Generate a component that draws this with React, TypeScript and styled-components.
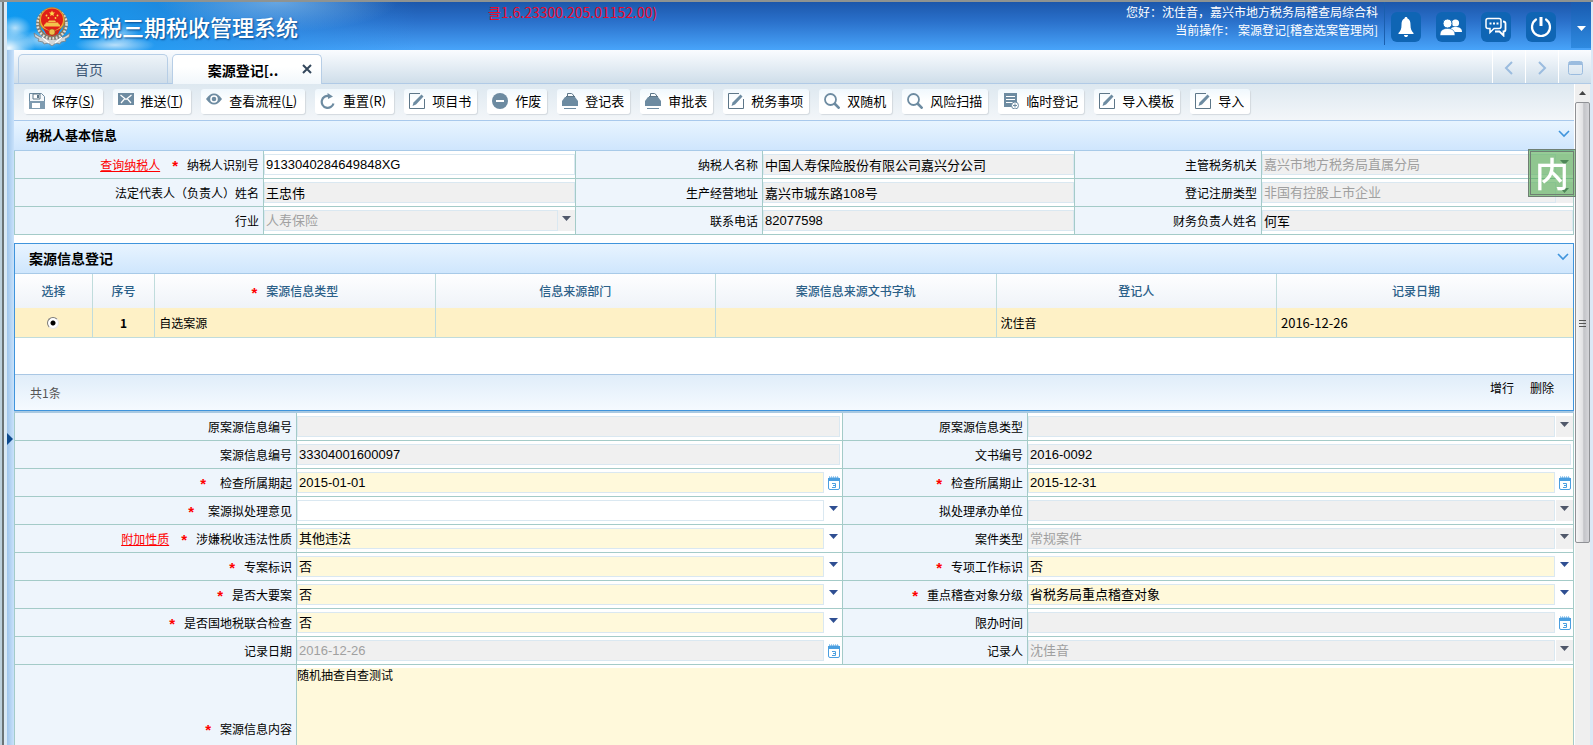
import React, { useId } from "react";
import styled, { createGlobalStyle, css } from "styled-components";

const uiFont = `"Noto Sans CJK SC", "Noto Sans", sans-serif`;
const valueFont = `"Liberation Sans", "Noto Sans CJK SC", sans-serif`;
const gridLine = "#a4cbc8";

const GlobalStyle = createGlobalStyle`
  *, *::before, *::after { box-sizing: border-box; }
  html, body { margin: 0; height: 100%; overflow: hidden; }
  body { font: 12px/18px ${uiFont}; color: #000; background: #fff; }
  button, input, select, textarea { font: inherit; color: inherit; margin: 0; border-radius: 0; }
  button { border: 0; background: none; padding: 0; cursor: pointer; }
`;

/* ---------- window frame ---------- */

const Window = styled.div`
  display: flex;
  height: 100vh;
  overflow: hidden;
  border-top: 2px solid #8f9391;
`;

const FrameEdge = styled.div`
  flex: none;
  width: 7px;
  background: linear-gradient(90deg, #bccfdb 0 2px, #6b7375 2px 4px, #d9e8f4 4px);
`;

const FrameRight = styled.div`
  flex: none;
  width: 2px;
  background: #dbe9f6;
`;

const Main = styled.div`
  flex: 1;
  min-width: 0;
  display: flex;
  flex-direction: column;
`;

const Body = styled.div`
  flex: 1;
  min-height: 0;
  display: flex;
`;

const Rail = styled.button`
  flex: none;
  width: 7px;
  display: flex;
  align-items: center;
  background: linear-gradient(90deg, #9fc4ea, #c9e2fb);
  padding-top: 83px;
`;

const Workspace = styled.div`
  flex: 1;
  min-width: 0;
  display: flex;
  flex-direction: column;
`;

/* ---------- header ---------- */

const Header = styled.header`
  flex: none;
  height: 48px;
  display: flex;
  align-items: flex-start;
  color: #fff;
  background:
    radial-gradient(ellipse 26px 18px at 2px 46px, #fffffff0, #ffffff00),
    radial-gradient(ellipse 16px 12px at 8px 26px, #ffffffb0, #ffffff00),
    radial-gradient(ellipse 26px 10px at 34px 38px, #ffffff90, #ffffff00),
    radial-gradient(ellipse 40px 9px at 108px 43px, #ffffffb0, #ffffff00),
    radial-gradient(ellipse 16px 11px at 116px 32px, #ffffff60, #ffffff00),
    radial-gradient(ellipse 120px 30px at 270px 0, #8fc4f0a0, #8fc4f000),
    linear-gradient(90deg, #0f9af0 0, #1a9bf0d0 120px, #2a92ea80 260px, #2a86e000 410px),
    linear-gradient(#1c57ab, #2a70ca 40%, #48a4fa);
`;

const Brand = styled.h1`
  display: flex;
  align-items: center;
  gap: 7px;
  margin: 0;
  padding-left: 26px;
  height: 48px;
  font-size: 22px;
  line-height: 32px;
  font-weight: 500;
  white-space: nowrap;
  text-shadow: 1px 1px 2px #0a4a8c;
`;

const Version = styled.div`
  flex: 1;
  padding-left: 190px;
  font-size: 14px;
  line-height: 20px;
  color: #ec0a2c;
  white-space: nowrap;
`;

const UserInfo = styled.div`
  padding: 1px 6px 0 0;
  height: 43px;
  text-align: right;
  white-space: nowrap;
  border-right: 1px solid #1a5fae;
`;

const HeaderTools = styled.div`
  display: flex;
  gap: 15px;
  padding: 10px 15px 0 6px;
`;

const HeaderButton = styled.button`
  width: 30px;
  height: 30px;
  border-radius: 6px;
  background: #0f65b4;
  display: grid;
  place-items: center;
`;

const HeaderMore = styled.button`
  width: 20px;
  height: 46px;
  background: linear-gradient(#195bb0, #2e8ae0);
  display: grid;
  place-items: center;
  padding-top: 6px;
`;

/* ---------- tabs ---------- */

const TabStrip = styled.nav`
  flex: none;
  height: 34px;
  display: flex;
  align-items: flex-end;
  gap: 4px;
  padding-left: 4px;
  border-bottom: 1px solid #b0cae6;
  background: linear-gradient(#fafcff, #cfdeea);
`;

const Tab = styled.div<{ $active?: boolean }>`
  display: flex;
  align-items: center;
  width: 150px;
  height: 29px;
  padding: 0 16px 0 8px;
  border: 1px solid #b7cee6;
  border-bottom: 0;
  border-radius: 5px 5px 0 0;
  background: linear-gradient(#eef4f9, #cfdde9);
  ${(p) => p.$active && css`
    height: 30px;
    padding: 0 9px 0 11px;
    margin-bottom: -1px;
    background: linear-gradient(#fff 40%, #f1f7fb);
  `}
`;

const TabLabel = styled.button<{ $active?: boolean }>`
  flex: 1;
  font-size: 14px;
  line-height: 20px;
  color: ${(p) => (p.$active ? "#000" : "#3d5775")};
  font-weight: ${(p) => (p.$active ? 700 : 400)};
`;

const TabClose = styled.button`
  width: 10px;
  height: 18px;
  padding-bottom: 2px;
  display: grid;
  place-items: center;
`;

const TabNav = styled.div`
  display: flex;
  align-self: stretch;
  margin-left: auto;
`;

const TabNavButton = styled.button`
  width: 33px;
  display: grid;
  place-items: center;
  border-left: 1px solid #fff;
  padding-top: 3px;
`;

/* ---------- toolbar ---------- */

const Pane = styled.div`
  flex: 1;
  min-height: 0;
  display: flex;
`;

const Content = styled.main`
  flex: 1;
  min-width: 0;
  overflow: hidden;
  background: #fff;
  padding-right: 1px;
`;

const Toolbar = styled.div`
  display: flex;
  gap: 10px;
  height: 37px;
  padding: 5px 10px;
  border-bottom: 1px solid #a9c9ec;
  background: linear-gradient(#dde8f0, #f3f6f9);
`;

const ToolButton = styled.button<{ $hotkey?: boolean }>`
  display: flex;
  align-items: center;
  gap: 7px;
  height: 25px;
  padding: 0 ${(p) => (p.$hotkey ? 8 : 6)}px 2px 5px;
  font-size: 13px;
  line-height: 20px;
  white-space: nowrap;
  border-radius: 3px;
  background: linear-gradient(#f0f8fd, #fff 50%);
  box-shadow: 1px 1px 1px #d3d9de;
`;

/* ---------- sections and forms ---------- */

const SectionHead = styled.div<{ $framed?: boolean }>`
  display: flex;
  align-items: flex-start;
  justify-content: space-between;
  height: 30px;
  padding: 4px 4px 0 12px;
  border-bottom: 1px solid #a8cae8;
  background: linear-gradient(#e8f4ff, #cfe6fd);
  ${(p) => p.$framed && css`padding-left: 14px;`}
`;

const SectionTitle = styled.h2<{ $large?: boolean }>`
  margin: 0;
  font-size: ${(p) => (p.$large ? 14 : 13)}px;
  line-height: 20px;
  font-weight: 700;
`;

const CollapseButton = styled.button`
  width: 12px;
  padding-top: 5px;
  line-height: 0;
`;

const FormGrid = styled.div<{ $columns: string }>`
  display: grid;
  grid-template-columns: ${(p) => p.$columns};
  border-left: 1px solid ${gridLine};
`;

const LabelCell = styled.div`
  display: flex;
  align-items: center;
  justify-content: flex-end;
  min-width: 0;
  padding-right: 4px;
  background: #eef5fc;
  border: solid ${gridLine};
  border-width: 0 1px 1px 0;
  white-space: nowrap;
`;

const LabelLink = styled.a`
  color: #f00;
  margin-right: 12px;
`;

const Star = styled.span<{ $wide?: boolean }>`
  padding-top: 2px;
  margin-right: ${(p) => (p.$wide ? 14 : 9)}px;
  font: 700 15px/15px "Liberation Sans", sans-serif;
  color: #f00;
`;

const ValueCell = styled.div<{ $inset?: boolean; $span?: boolean }>`
  display: flex;
  min-width: 0;
  height: 28px;
  padding: 3px ${(p) => (p.$inset ? 2 : 0)}px 3px 0;
  border: solid ${gridLine};
  border-width: 0 1px 1px 0;
  ${(p) => p.$span && css`grid-column: span 3; height: 128px;`}
`;

type Tone = "plain" | "locked" | "required";
const toneColor: Record<Tone, string> = { plain: "#fff", locked: "#f0f0f0", required: "#fff9db" };

const control = css<{ $tone: Tone; $muted?: boolean }>`
  flex: 1;
  min-width: 0;
  height: 21px;
  padding: 0 1px;
  border: 1px solid #dae8f1;
  outline: 0;
  background: ${(p) => toneColor[p.$tone]};
  font: 13px/19px ${valueFont};
  color: ${(p) => (p.$muted ? "#a0a0a0" : "#000")};
`;

const TextInput = styled.input`${control}`;

const SelectInput = styled.select`
  ${control}
  appearance: none;
  opacity: 1;
`;

const ArrowBox = styled.span<{ $locked?: boolean; $apart?: boolean }>`
  flex: none;
  width: 17px;
  height: 21px;
  margin-left: ${(p) => (p.$apart ? 1 : 0)}px;
  padding: 6px 0 0 4px;
  line-height: 0;
  background: ${(p) => (p.$locked ? "#f0f0f0" : "transparent")};
`;

const DateButton = styled.button`
  flex: none;
  width: 17px;
  height: 21px;
  margin-left: 1px;
  display: grid;
  place-items: center;
`;

const NoteArea = styled.textarea`
  flex: 1;
  min-width: 0;
  padding: 0;
  border: 0;
  outline: 0;
  resize: none;
  background: #fff9db;
  font: 12px/14px ${uiFont};
`;

/* ---------- case table ---------- */

const CasePanel = styled.section`
  margin-top: 8px;
  border: 1px solid #3f94dc;
`;

const CaseTable = styled.table`
  width: 100%;
  table-layout: fixed;
  border-collapse: separate;
  border-spacing: 0;
`;

const HeadCell = styled.th<{ $width: string }>`
  width: ${(p) => p.$width};
  height: 34px;
  padding: 0;
  font-weight: 500;
  color: #2b6088;
  background: linear-gradient(#fefeff, #eff3f8);
  border-right: 1px solid #c0dcdc;
  &:last-child { border-right: 0; padding-right: 18px; }
`;

const HeadContent = styled.span`
  display: flex;
  align-items: center;
  justify-content: center;
`;

const DataCell = styled.td<{ $center?: boolean; $date?: boolean }>`
  height: 30px;
  padding: 0 4px;
  text-align: ${(p) => (p.$center ? "center" : "left")};
  font-weight: ${(p) => (p.$center ? 700 : 400)};
  font-size: ${(p) => (p.$date ? 13 : 12)}px;
  line-height: 18px;
  background: #fef1c6;
  border: solid #c0dcdc;
  border-width: 0 1px 1px 0;
  &:last-child { border-right: 0; }
`;

const RowRadio = styled.input`
  appearance: none;
  display: block;
  width: 12px;
  height: 12px;
  margin: 0 auto;
  border: 1px solid;
  border-color: #7a7a7a #e8e8e8 #e8e8e8 #7a7a7a;
  border-radius: 50%;
  background: radial-gradient(circle, #000 0 2px, #fff 3px);
`;

const CaseFooter = styled.div`
  display: flex;
  justify-content: space-between;
  height: 36px;
  margin-top: 36px;
  padding: 4px 19px 0 15px;
  border-top: 1px solid #a9c7e4;
  background: linear-gradient(#e0edf9, #f5faff);
`;

const RowCount = styled.span`
  padding-top: 5px;
  color: #555;
`;

const FooterActions = styled.div`
  display: flex;
  align-items: flex-start;
  gap: 16px;
`;

const Divider = styled.div`
  height: 2px;
  background: #a9c9e2;
`;

/* ---------- scroll bar and floating badge ---------- */

const ScrollBar = styled.div`
  flex: none;
  width: 16px;
  display: flex;
  flex-direction: column;
  border-right: 1px solid #dbe9f6;
  background: #efefef;
`;

const ScrollUp = styled.button`
  height: 18px;
  display: grid;
  place-items: center;
`;

const ScrollThumb = styled.div`
  flex: 440;
  display: grid;
  place-items: center;
  border: 1px solid #8f9195;
  border-radius: 2px;
  background: linear-gradient(90deg, #f6f6f6, #e2e2e4 50%, #c3c4c8 60%, #d6d6da);
`;

const ScrollRest = styled.div`
  flex: 202;
`;

const ImeBadge = styled.div`
  position: fixed;
  top: 149px;
  right: 17px;
  width: 48px;
  height: 48px;
  display: grid;
  place-items: center;
  border: 3px double #6f7f73;
  background: #4ca84c96;
  color: #fff;
  font-size: 34px;
  font-weight: 500;
  line-height: 42px;
`;

/* ---------- drawings ---------- */

const Svg = ({ w = 16, h = w, box, children }: { w?: number; h?: number; box?: string; children: React.ReactNode }) => (
  <svg width={w} height={h} viewBox={box ?? `0 0 ${w} ${h}`} fill="none" aria-hidden="true">{children}</svg>
);

const Emblem = () => (
  <Svg w={38} h={40}>
    <path d="M1 27c5 4 10 6 18 6s13-2 18-6l-1 4-4 2 1 2-5 1-1 2-4-1-4 3-4-3-4 1-1-2-5-1 1-2-4-2z" fill="#d4d6d8" stroke="#777d82" strokeWidth=".8" />
    <path d="M9 31l7 6M29 31l-7 6" stroke="#fff" strokeWidth="1.300" />
    <circle cx="19" cy="18" r="14" stroke="#7b7a76" strokeWidth="4" />
    <circle cx="19" cy="18" r="14.500" stroke="#e2dfd6" strokeWidth="2.600" strokeDasharray="1.800 1.600" />
    <circle cx="19" cy="18" r="12.300" stroke="#a8772e" strokeWidth="1" strokeDasharray="2 1" />
    <circle cx="19" cy="14" r="12.500" fill="#e9b23c" stroke="#b5701c" strokeWidth=".6" />
    <circle cx="19" cy="13.500" r="11" fill="#e01f18" />
    <path d="M19 4.500l.9 1.900 2.100.2-1.600 1.400.5 2.100-1.900-1.100-1.900 1.100.5-2.100L16 6.600l2.100-.2z" fill="#ffd94a" />
    <g fill="#ffd94a"><circle cx="13.500" cy="9.500" r=".9" /><circle cx="15.500" cy="12" r=".9" /><circle cx="22.500" cy="12" r=".9" /><circle cx="24.500" cy="9.500" r=".9" /></g>
    <path d="M11 18.500h16v2H11zM13 16.500h12l1 2H12zM16 14.500h6l1 1.500h-8z" fill="#f3c64c" />
    <path d="M10 22c3 2 6 3 9 3s6-1 9-3l-3 6c-2 1-4 2-6 2s-4-1-6-2z" fill="#d2261b" />
    <circle cx="19" cy="26" r="3" fill="#efc04e" stroke="#9c6a1c" strokeWidth=".6" />
  </Svg>
);

const steel = "#6d8ba1";

const SaveIcon = () => (
  <Svg>
    <path d="M.5.5h12l3 3v12H.5z" fill="#f4f8fb" stroke={steel} />
    <path d="M0 8h16v8H0z" fill="#7f9bb0" /><path d="M3 10h8v5H3z" fill="#fff" />
    <path d="M4 1h7v5H4z" fill="#fff" stroke="#5d7688" /><path d="M8 2h2v3H8z" fill="#5d7688" />
  </Svg>
);
const MailIcon = () => (
  <Svg>
    <path d="M0 0h16v12H0z" fill={steel} />
    <path d="M2.500 2l5.500 4.500L13.500 2M3 10l3.500-4M13 10L9.500 6" stroke="#fff" strokeWidth="1.200" />
  </Svg>
);
const EyeIcon = () => (
  <Svg>
    <path d="M0 6C3 2 5 .500 8 .500s5 1.500 8 5.500c-3 4-5 5.500-8 5.500S3 10 0 6z" fill={steel} />
    <circle cx="8" cy="6" r="3.800" fill="#fff" /><circle cx="8" cy="6" r="2.300" fill={steel} />
  </Svg>
);
const ResetIcon = () => (
  <Svg>
    <path d="M9 3A6 6 0 1 0 13.500 10.500" stroke={steel} strokeWidth="2.200" />
    <path d="M7.500 0L13 3.500 8 6z" fill={steel} />
  </Svg>
);
const EditIcon = () => (
  <Svg>
    <path d="M11 .5H.5v15h15V6" stroke="#5d7688" />
    <path d="M3.500 13l1-3.500L12.500 1.500l2 2L7 11.500z" fill={steel} />
  </Svg>
);
const VoidIcon = () => (
  <Svg><circle cx="8" cy="8" r="8" fill={steel} /><path d="M4 7h8v2H4z" fill="#fff" /></Svg>
);
const PrintIcon = () => (
  <Svg>
    <path d="M5.500 4V.500h4L11.500 2v2M4 3.500h9" stroke="#5d7688" />
    <path d="M3 4h10l3 4v5H0V8z" fill={steel} /><path d="M2 15.500h12" stroke={steel} />
  </Svg>
);
const SearchIcon = () => (
  <Svg><circle cx="6.500" cy="6.500" r="5.500" stroke={steel} strokeWidth="1.800" /><path d="M10.500 10.500l5 5" stroke={steel} strokeWidth="2.600" /></Svg>
);
const FormAddIcon = () => (
  <Svg>
    <path d="M1 0h13v14H1z" fill={steel} /><path d="M3 3.500h9M3 6.500h9M3 9.500h9" stroke="#fff" />
    <circle cx="12" cy="12.500" r="3.500" fill="#fff" stroke={steel} /><path d="M10 12.500h4M12 10.500v4" stroke={steel} />
  </Svg>
);

const BellIcon = () => (
  <Svg w={18} h={22}>
    <path d="M9 1c1 0 1.500.7 1.500 1.500C13 3.300 13.500 6 13.500 9c0 4 1 6 3 8v1h-15v-1c2-2 3-4 3-8 0-3 .5-5.700 3-6.500C7.500 1.700 8 1 9 1zM7 19h4c0 1.500-1 2-2 2s-2-.5-2-2z" fill="#fff" />
  </Svg>
);
const UsersIcon = () => (
  <Svg w={22} h={18}>
    <circle cx="15.500" cy="5" r="3.600" fill="#fff" /><path d="M10 14c0-4 2-5 5.500-5s6.500 1 6.500 5z" fill="#fff" />
    <circle cx="7.500" cy="5.500" r="4.500" fill="#fff" stroke="#0f65b4" />
    <path d="M0 17.500c0-5 2.500-7 7.500-7s7.500 2 7.500 7z" fill="#fff" stroke="#0f65b4" strokeWidth=".6" />
  </Svg>
);
const ChatIcon = () => (
  <Svg w={22} h={20}>
    <path d="M3 1.500h11c1.500 0 2 .5 2 2v6c0 1.500-.5 2-2 2H9l-4 4v-4H3c-1.500 0-2-.5-2-2v-6c0-1.500.5-2 2-2z" stroke="#fff" strokeWidth="1.500" />
    <path d="M4.500 5.500h2v2h-2zM8 5.500h2v2H8zM11.500 5.500h2v2h-2z" fill="#fff" />
    <path d="M18 4.500c2 0 2.500.5 2.500 2v6c0 1.500-.5 2-2 2v4l-4-4H10" stroke="#fff" strokeWidth="1.800" />
  </Svg>
);
const PowerIcon = () => (
  <Svg w={22} h={22}>
    <path d="M6 3.500a9 9 0 1 0 10 0" stroke="#fff" strokeWidth="2.200" strokeLinecap="round" />
    <path d="M11 1v9" stroke="#fff" strokeWidth="3" />
  </Svg>
);
const Triangle = ({ color, w = 9, h = 5 }: { color: string; w?: number; h?: number }) => (
  <Svg w={w} h={h}><path d={`M0 0h${w}L${w / 2} ${h}z`} fill={color} /></Svg>
);
const Chevron = ({ d }: { d: string }) => (
  <Svg w={10} h={14}><path d={d} stroke="#9bbcdf" strokeWidth="2" /></Svg>
);
const WindowIcon = () => (
  <Svg w={15} h={14}>
    <rect x=".5" y=".5" width="14" height="13" rx="2" stroke="#9bbcdf" /><path d="M1 1h13v3H1z" fill="#9bbcdf" />
  </Svg>
);
const CollapseIcon = () => (
  <Svg w={12} h={8}><path d="M1 1l5 5 5-5" stroke="#3f94dc" strokeWidth="1.600" /></Svg>
);
const CalendarIcon = () => (
  <Svg w={12} h={14}>
    <rect x=".5" y="2" width="11" height="11.500" rx="1.500" fill="#fff" stroke="#4b9fe0" />
    <path d="M0 2h12v3H0z" fill="#4b9fe0" /><path d="M1 1h10" stroke="#4b9fe0" strokeDasharray="1 1" />
    <path d="M4 7.500h3.500v4H4M5 9.500h2.500" stroke="#4b9fe0" />
  </Svg>
);
const CloseIcon = () => (
  <Svg w={10} h={10}><path d="M1 1l8 8M9 1l-8 8" stroke="#33475c" strokeWidth="2" /></Svg>
);

/* ---------- data ---------- */

const tools: { icon: React.ReactNode; text: string; hotkey?: string; underlined?: boolean }[] = [
  { icon: <SaveIcon />, text: "保存", hotkey: "S", underlined: true },
  { icon: <MailIcon />, text: "推送", hotkey: "T", underlined: true },
  { icon: <EyeIcon />, text: "查看流程", hotkey: "L", underlined: true },
  { icon: <ResetIcon />, text: "重置", hotkey: "R" },
  { icon: <EditIcon />, text: "项目书" },
  { icon: <VoidIcon />, text: "作废" },
  { icon: <PrintIcon />, text: "登记表" },
  { icon: <PrintIcon />, text: "审批表" },
  { icon: <EditIcon />, text: "税务事项" },
  { icon: <SearchIcon />, text: "双随机" },
  { icon: <SearchIcon />, text: "风险扫描" },
  { icon: <FormAddIcon />, text: "临时登记" },
  { icon: <EditIcon />, text: "导入模板" },
  { icon: <EditIcon />, text: "导入" },
];

type FieldSpec = {
  label: string;
  value?: string;
  kind?: "text" | "select" | "date";
  tone?: Tone;
  muted?: boolean;
  star?: boolean;
  wide?: boolean;
  link?: string;
};

const taxpayer: FieldSpec[] = [
  { label: "纳税人识别号", value: "9133040284649848XG", tone: "plain", star: true, link: "查询纳税人" },
  { label: "纳税人名称", value: "中国人寿保险股份有限公司嘉兴分公司" },
  { label: "主管税务机关", value: "嘉兴市地方税务局直属分局", kind: "select", muted: true },
  { label: "法定代表人（负责人）姓名", value: "王忠伟" },
  { label: "生产经营地址", value: "嘉兴市城东路108号" },
  { label: "登记注册类型", value: "非国有控股上市企业", kind: "select", muted: true },
  { label: "行业", value: "人寿保险", kind: "select", muted: true },
  { label: "联系电话", value: "82077598" },
  { label: "财务负责人姓名", value: "何军" },
];

const caseFields: FieldSpec[] = [
  { label: "原案源信息编号" },
  { label: "原案源信息类型", kind: "select" },
  { label: "案源信息编号", value: "33304001600097" },
  { label: "文书编号", value: "2016-0092" },
  { label: "检查所属期起", value: "2015-01-01", kind: "date", tone: "required", star: true, wide: true },
  { label: "检查所属期止", value: "2015-12-31", kind: "date", tone: "required", star: true },
  { label: "案源拟处理意见", kind: "select", tone: "plain", star: true, wide: true },
  { label: "拟处理承办单位", kind: "select" },
  { label: "涉嫌税收违法性质", value: "其他违法", kind: "select", tone: "required", star: true, link: "附加性质" },
  { label: "案件类型", value: "常规案件", kind: "select", muted: true },
  { label: "专案标识", value: "否", kind: "select", tone: "required", star: true },
  { label: "专项工作标识", value: "否", kind: "select", tone: "required", star: true },
  { label: "是否大要案", value: "否", kind: "select", tone: "required", star: true },
  { label: "重点稽查对象分级", value: "省税务局重点稽查对象", kind: "select", tone: "required", star: true },
  { label: "是否国地税联合检查", value: "否", kind: "select", tone: "required", star: true },
  { label: "限办时间", kind: "date" },
  { label: "记录日期", value: "2016-12-26", kind: "date", muted: true },
  { label: "记录人", value: "沈佳音", kind: "select", muted: true },
];

const caseColumns = [
  { title: "选择", width: "5%" },
  { title: "序号", width: "4%" },
  { title: "案源信息类型", width: "18%", star: true },
  { title: "信息来源部门", width: "18%" },
  { title: "案源信息来源文书字轨", width: "18%" },
  { title: "登记人", width: "18%" },
  { title: "记录日期", width: "19%" },
];

/* ---------- parts ---------- */

function Field({ spec, inset }: { spec: FieldSpec; inset?: boolean }) {
  const id = useId();
  const { label, value = "", kind = "text", tone = "locked", muted, star, wide, link } = spec;
  const locked = tone === "locked";
  return (
    <>
      <LabelCell>
        {link && <LabelLink href="#">{link}</LabelLink>}
        {star && <Star $wide={wide}>*</Star>}
        <label htmlFor={id}>{label}</label>
      </LabelCell>
      <ValueCell $inset={inset && kind === "text"}>
        {kind === "select" ? (
          <>
            <SelectInput id={id} $tone={tone} $muted={muted} disabled={locked} defaultValue={value}>
              <option>{value}</option>
            </SelectInput>
            <ArrowBox $locked={locked} $apart={inset}><Triangle color={locked ? "#50586a" : "#2f4f92"} /></ArrowBox>
          </>
        ) : (
          <TextInput id={id} $tone={tone} $muted={muted} readOnly={locked} defaultValue={value} />
        )}
        {kind === "date" && <DateButton type="button" aria-label={`${label} 日历`}><CalendarIcon /></DateButton>}
      </ValueCell>
    </>
  );
}

export default function App() {
  return (
    <Window lang="zh-CN">
      <GlobalStyle />
      <FrameEdge />
      <Main>
        <Header>
          <Brand><Emblem />金税三期税收管理系统</Brand>
          <Version>클1.6.23300.205.01152.00)</Version>
          <UserInfo>
            <div>您好：沈佳音，嘉兴市地方税务局稽查局综合科</div>
            <div>当前操作： 案源登记[稽查选案管理岗]</div>
          </UserInfo>
          <HeaderTools>
            <HeaderButton aria-label="通知"><BellIcon /></HeaderButton>
            <HeaderButton aria-label="用户"><UsersIcon /></HeaderButton>
            <HeaderButton aria-label="消息"><ChatIcon /></HeaderButton>
            <HeaderButton aria-label="退出"><PowerIcon /></HeaderButton>
          </HeaderTools>
          <HeaderMore aria-label="更多"><Triangle color="#fff" /></HeaderMore>
        </Header>
        <Body>
          <Rail aria-label="展开侧栏">
            <Svg w={6} h={12}><path d="M0 0l6 6-6 6z" fill="#0d4a8e" /></Svg>
          </Rail>
          <Workspace>
            <TabStrip>
              <Tab><TabLabel>首页</TabLabel></Tab>
              <Tab $active>
                <TabLabel $active>案源登记[..</TabLabel>
                <TabClose aria-label="关闭"><CloseIcon /></TabClose>
              </Tab>
              <TabNav>
                <TabNavButton aria-label="上一个"><Chevron d="M8 1L2 7l6 6" /></TabNavButton>
                <TabNavButton aria-label="下一个"><Chevron d="M2 1l6 6-6 6" /></TabNavButton>
                <TabNavButton aria-label="窗口"><WindowIcon /></TabNavButton>
              </TabNav>
            </TabStrip>
            <Pane>
              <Content>
                <Toolbar>
                  {tools.map((t) => (
                    <ToolButton key={t.text} type="button" $hotkey={!!t.hotkey}>
                      {t.icon}
                      <span>{t.text}{t.hotkey && <>({t.underlined ? <u>{t.hotkey}</u> : t.hotkey})</>}</span>
                    </ToolButton>
                  ))}
                </Toolbar>
                <section>
                  <SectionHead>
                    <SectionTitle>纳税人基本信息</SectionTitle>
                    <CollapseButton aria-label="收起纳税人基本信息"><CollapseIcon /></CollapseButton>
                  </SectionHead>
                  <FormGrid $columns="249fr 312fr 187fr 312fr 187fr 312fr">
                    {taxpayer.map((f) => <Field key={f.label} spec={f} />)}
                  </FormGrid>
                </section>
                <CasePanel>
                  <SectionHead $framed>
                    <SectionTitle $large>案源信息登记</SectionTitle>
                    <CollapseButton aria-label="收起案源信息登记"><CollapseIcon /></CollapseButton>
                  </SectionHead>
                  <CaseTable>
                    <thead>
                      <tr>
                        {caseColumns.map((c) => (
                          <HeadCell key={c.title} $width={c.width}>
                            <HeadContent>{c.star && <Star>*</Star>}{c.title}</HeadContent>
                          </HeadCell>
                        ))}
                      </tr>
                    </thead>
                    <tbody>
                      <tr>
                        <DataCell $center><RowRadio type="radio" name="case" defaultChecked aria-label="选择第1行" /></DataCell>
                        <DataCell $center>1</DataCell>
                        <DataCell>自选案源</DataCell>
                        <DataCell />
                        <DataCell />
                        <DataCell>沈佳音</DataCell>
                        <DataCell $date>2016-12-26</DataCell>
                      </tr>
                    </tbody>
                  </CaseTable>
                  <CaseFooter>
                    <RowCount>共1条</RowCount>
                    <FooterActions>
                      <button type="button">增行</button>
                      <button type="button">删除</button>
                    </FooterActions>
                  </CaseFooter>
                </CasePanel>
                <Divider />
                <FormGrid $columns="282fr 546fr 185fr 546fr">
                  {caseFields.map((f) => <Field key={f.label} spec={f} inset />)}
                  <LabelCell>
                    <Star>*</Star>
                    <label htmlFor="case-note">案源信息内容</label>
                  </LabelCell>
                  <ValueCell $span>
                    <NoteArea id="case-note" defaultValue="随机抽查自查测试" />
                  </ValueCell>
                </FormGrid>
              </Content>
              <ScrollBar aria-hidden="true">
                <ScrollUp tabIndex={-1}><Svg w={7} h={4}><path d="M0 4h7L3.500 0z" fill="#444" /></Svg></ScrollUp>
                <ScrollThumb><Svg w={7} h={8}><path d="M0 1.500h7M0 4.500h7M0 7.500h7" stroke="#555" /></Svg></ScrollThumb>
                <ScrollRest />
              </ScrollBar>
            </Pane>
          </Workspace>
        </Body>
      </Main>
      <FrameRight />
      <ImeBadge>内</ImeBadge>
    </Window>
  );
}
